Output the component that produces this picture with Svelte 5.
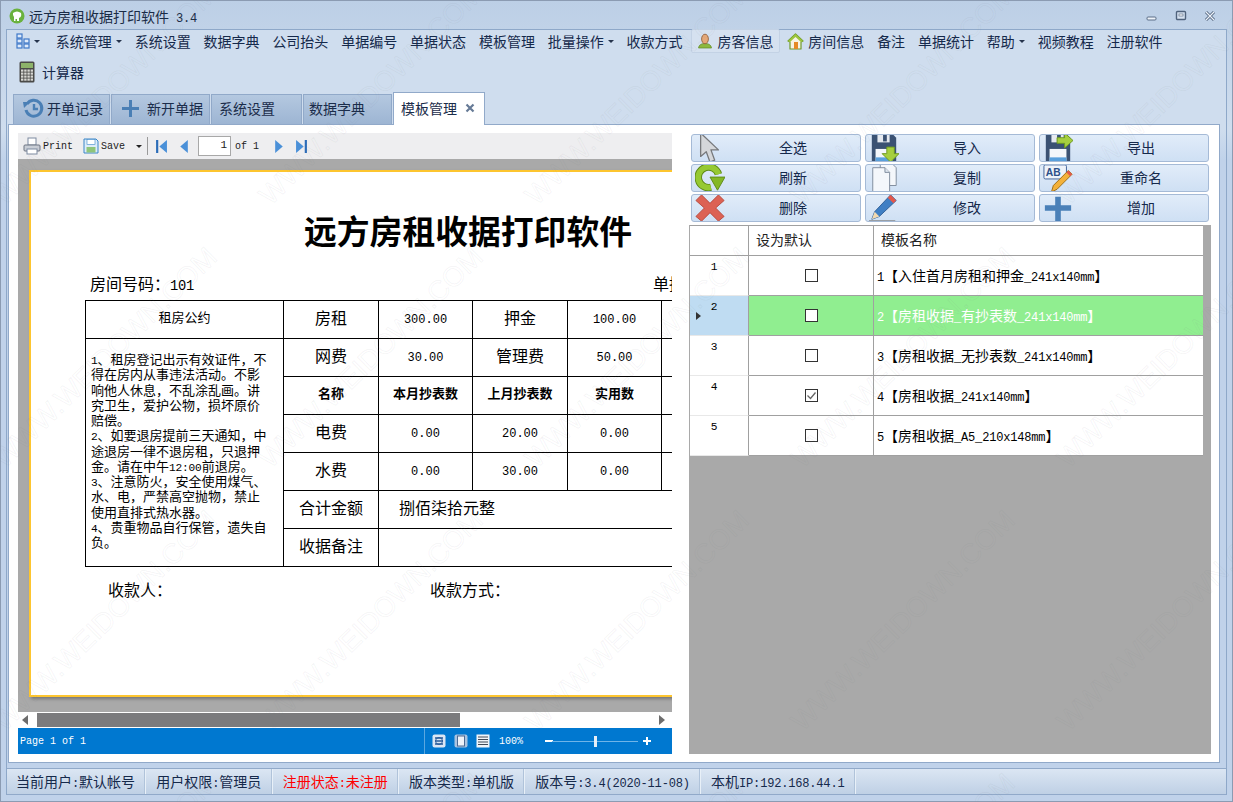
<script>
	const menu = [
		{ t: '系统管理', arrow: true }, { t: '系统设置' }, { t: '数据字典' }, { t: '公司抬头' }, { t: '单据编号' },
		{ t: '单据状态' }, { t: '模板管理' }, { t: '批量操作', arrow: true }, { t: '收款方式' },
		{ t: '房客信息', icon: 'user', hover: true }, { t: '房间信息', icon: 'home' }, { t: '备注' },
		{ t: '单据统计' }, { t: '帮助', arrow: true }, { t: '视频教程' }, { t: '注册软件' }
	];
	const tabs = [
		{ t: '开单记录', icon: 'history', w: 97, pad: 9, gap: 3 },
		{ t: '新开单据', icon: 'plus', w: 99, pad: 10, gap: 8 },
		{ t: '系统设置', w: 91, pad: 7, gap: 0 },
		{ t: '数据字典', w: 89, pad: 5, gap: 0 }
	];
	const buttons = [
		{ t: '全选', icon: 'cursor' }, { t: '导入', icon: 'import' }, { t: '导出', icon: 'export' },
		{ t: '刷新', icon: 'refresh' }, { t: '复制', icon: 'copy' }, { t: '重命名', icon: 'rename' },
		{ t: '删除', icon: 'remove' }, { t: '修改', icon: 'edit' }, { t: '增加', icon: 'add' }
	];
	const rows = [
		{ n: 1, name: '1【入住首月房租和押金_241x140mm】' },
		{ n: 2, name: '2【房租收据_有抄表数_241x140mm】', selected: true },
		{ n: 3, name: '3【房租收据_无抄表数_241x140mm】' },
		{ n: 4, name: '4【房租收据_241x140mm】', checked: true },
		{ n: 5, name: '5【房租收据_A5_210x148mm】' }
	];
	const status = ['当前用户:默认帐号', '用户权限:管理员', '注册状态:未注册', '版本类型:单机版', '版本号:3.4(2020-11-08)', '本机IP:192.168.44.1'];
	const rules = [
		'1、租房登记出示有效证件，不', '得在房内从事违法活动。不影', '响他人休息，不乱涂乱画。讲', '究卫生，爱护公物，损坏原价', '赔偿。',
		'2、如要退房提前三天通知，中', '途退房一律不退房租，只退押', '金。请在中午12:00前退房。',
		'3、注意防火，安全使用煤气、', '水、电，严禁高空抛物，禁止', '使用直排式热水器。',
		'4、贵重物品自行保管，遗失自', '负。'
	];

	// watermark repeats on a square lattice, each one starts bottom-left
	const marks = [];
	for (let row = -1; row < 4; row++) {
		for (let col = -2; col < 4; col++) {
			marks.push({ x: 540 + col * 266, y: 736 - row * 263 });
		}
	}

	// ascii runs get a half-width mono, the rest stays cjk
	const runs = (s) => s.match(/[\x00-\x7f]+|[^\x00-\x7f]+/g) ?? [];
	const isLatin = (s) => s.charCodeAt(0) < 128;
</script>

{#snippet txt(s)}
	{#each runs(s) as r}{#if isLatin(r)}<span class="lat">{r}</span>{:else}{r}{/if}{/each}
{/snippet}

{#snippet icon(name)}
	<svg class="ico" viewBox="0 0 32 32" width="32" height="32">
		{#if name === 'cursor'}
			<path d="M6 0 L6 25 L12 20 L16 31 L21 29 L17 18 L25 18 Z" fill="#d5d7da" stroke="#77797c" stroke-width="1.4" stroke-linejoin="round"/>
		{:else if name === 'import' || name === 'export'}
			<path d="M3 1 H25 L29 5 V30 H3 Z" fill="#3b5273"/>
			<rect x="9" y="1" width="13" height="9" fill="#e6eaf0"/>
			<rect x="15" y="2" width="4" height="7" fill="#3b5273"/>
			<rect x="7" y="17" width="18" height="13" fill="#f4f7fb"/>
			<rect x="7" y="26" width="18" height="4" fill="#5aa0dc"/>
			{#if name === 'import'}
				<path d="M19 15 H27 V22 H32 L23 31 L14 22 H19 Z" fill="#a6cf3f" stroke="#6d9a1f"/>
			{:else}
				<path d="M15 5 H23 V0 L32 8 L23 16 V11 H15 Z" fill="#a6cf3f" stroke="#6d9a1f"/>
			{/if}
		{:else if name === 'refresh'}
			<path d="M25 12 A11 11 0 1 0 17 26" fill="none" stroke="#5e8a17" stroke-width="8"/>
			<path d="M25 12 A11 11 0 1 0 17 26" fill="none" stroke="#96c932" stroke-width="6"/>
			<path d="M16 15 H32 L24 29 Z" fill="#84b826" stroke="#5e8a17"/>
		{:else if name === 'copy'}
			<path d="M12 0 H24 L29 5 V24 H12 Z" fill="#f4f7fb" stroke="#7d8a9b"/>
			<path d="M4 5 H17 L22 10 V31 H4 Z" fill="#f4f7fb" stroke="#7d8a9b"/>
			<path d="M17 5 V10 H22" fill="#dfe6ef" stroke="#7d8a9b"/>
		{:else if name === 'rename'}
			<rect x="1" y="2" width="24" height="15" rx="1.500" fill="#eef3fa" stroke="#3d5f96"/>
			<text x="3" y="14" class="ab">AB</text>
			<path d="M27 8 L31 12 L15 28 L9 31 L11 24 Z" fill="#f3b13a" stroke="#9a6a12"/>
			<path d="M27 8 L31 12 L29 14 L25 10 Z" fill="#e2584c"/>
		{:else if name === 'remove'}
			<path d="M7 2 L16 11 L25 2 L31 8 L22 16 L31 25 L25 30 L16 21 L7 30 L1 25 L10 16 L1 8 Z" fill="#dc6254" stroke="#b84a3e"/>
		{:else if name === 'edit'}
			<path d="M23 2 L29 8 L11 25 L3 28 L6 20 Z" fill="#3f7fc4" stroke="#2f5f96"/>
			<path d="M23 2 L29 8 L26 11 L20 5 Z" fill="#e2584c"/>
			<path d="M6 20 L11 25 L3 28 Z" fill="#f2d9b0"/>
			<rect x="0" y="29" width="28" height="3" fill="#8d8f93"/>
		{:else if name === 'add'}
			<path d="M13 4 H19 V13 H30 V19 H19 V30 H13 V19 H2 V13 H13 Z" fill="#4a80b8"/>
		{/if}
	</svg>
{/snippet}

<div class="window">
	<header class="title">
		<svg width="16" height="16" viewBox="0 0 16 16">
			<circle cx="8" cy="8" r="7.500" fill="#6ab23e"/>
			<path d="M4 5 Q8 2 12 5 Q13 9 10 10 V13 H8 V11 H6.500 V13 H5 V9 Q3.500 7 4 5 Z" fill="#fff"/>
		</svg>
		<span class="title-text">{@render txt('远方房租收据打印软件 3.4')}</span>
		<div class="win-btns">
			<svg width="12" height="12" viewBox="0 0 12 12"><rect x="1" y="7" width="9" height="3" rx="1" fill="#eef3f9" stroke="#5c6f88"/></svg>
			<svg width="12" height="12" viewBox="0 0 12 12"><rect x="1.500" y="1.500" width="9" height="8" rx="1" fill="#d6e2f0" stroke="#4f627c" stroke-width="1.400"/><rect x="4" y="4" width="4" height="2" fill="#fff" stroke="#4f627c" stroke-width=".6"/></svg>
			<svg width="12" height="12" viewBox="0 0 12 12"><path d="M2 2 L10 10 M10 2 L2 10" stroke="#4f627c" stroke-width="3"/><path d="M2 2 L10 10 M10 2 L2 10" stroke="#eef3f9" stroke-width="1.200"/></svg>
		</div>
	</header>

	<div class="frame">
		<nav class="menu">
			<div class="item first">
				<svg width="14" height="16" viewBox="0 0 14 16">
					<g fill="#dfeafa" stroke="#3f78c8" stroke-width="1.200">
						<rect x="1" y="1" width="5" height="4"/><rect x="8" y="6" width="5" height="4"/><rect x="1" y="6" width="5" height="4"/><rect x="1" y="11" width="5" height="4"/><rect x="8" y="11" width="5" height="4"/>
					</g>
				</svg>
				<i class="caret"></i>
			</div>
			{#each menu as m}
				<div class="item" class:hover={m.hover}>
					{#if m.icon === 'user'}
						<svg width="16" height="16" viewBox="0 0 16 16">
							<path d="M1.500 15 Q2 10.500 8 10.500 Q14 10.500 14.500 15 Z" fill="#8db83f" stroke="#5f8a22" stroke-width=".7"/>
							<ellipse cx="8" cy="6" rx="3.400" ry="4.800" fill="#e5a878" stroke="#8a5630" stroke-width=".8"/>
						</svg>
					{:else if m.icon === 'home'}
						<svg width="17" height="17" viewBox="0 0 17 17">
							<path d="M8.500 1 L16 8 L14 9 V16 H3 V9 L1 8 Z" fill="#f7f3e3" stroke="#6f9a2a" stroke-width="1.200" stroke-linejoin="round"/>
							<path d="M8.500 1 L16 8 L14 9 L8.500 4 L3 9 L1 8 Z" fill="#9cc53c"/>
							<rect x="7" y="9" width="4" height="7" fill="#e58a25"/>
						</svg>
					{/if}
					<span>{m.t}</span>
					{#if m.arrow}<i class="caret"></i>{/if}
				</div>
			{/each}
		</nav>
		<div class="menu-second">
			<svg width="16" height="22" viewBox="0 0 16 22">
				<rect x=".5" y=".5" width="15" height="21" rx="1.500" fill="#4a4a48"/>
				<rect x="2" y="2" width="12" height="5" fill="#8db36a"/>
				<g fill="#d8d8d4">
					{#each [8.5, 11.5, 14.5, 17.5] as y}
						{#each [2, 5.2, 8.4, 11.6] as x}
							<rect {x} {y} width="2.400" height="2.200"/>
						{/each}
					{/each}
				</g>
			</svg>
			<span>计算器</span>
		</div>

		<div class="tabs">
			{#each tabs as tab}
				<div class="tab" style:width="{tab.w}px" style:padding-left="{tab.pad}px" style:gap="{tab.gap}px">
					{#if tab.icon === 'history'}
						<svg width="21" height="21" viewBox="0 0 21 21">
							<path d="M4 6 A8 8 0 1 1 3 12" fill="none" stroke="#4a7fb5" stroke-width="3"/>
							<path d="M0 4 L7 4 L1 10 Z" fill="#4a7fb5"/>
							<path d="M11 6 V11 H15" fill="none" stroke="#4a7fb5" stroke-width="2.400"/>
						</svg>
					{:else if tab.icon === 'plus'}
						<svg width="17" height="17" viewBox="0 0 17 17"><path d="M7 0 H10 V7 H17 V10 H10 V17 H7 V10 H0 V7 H7 Z" fill="#4a7fb5"/></svg>
					{/if}
					<span>{tab.t}</span>
				</div>
			{/each}
			<div class="tab active">
				<span>模板管理</span>
				<svg width="10" height="10" viewBox="0 0 10 10"><path d="M1.500 1.500 L8.500 8.500 M8.500 1.500 L1.500 8.500" stroke="#667a96" stroke-width="2.200"/></svg>
			</div>
		</div>

		<main class="content">
			<section class="preview">
				<div class="pv-tools">
					<svg width="18" height="18" viewBox="0 0 18 18">
						<rect x="5" y="1" width="8" height="7" fill="#fff" stroke="#7d8aa0"/>
						<rect x="1" y="8" width="16" height="6" rx="1" fill="#c9ced6" stroke="#6d7482"/>
						<rect x="4" y="12" width="10" height="5" fill="#fff" stroke="#7d8aa0"/>
					</svg>
					<span class="pv-label">Print</span>
					<svg class="gap-l" width="16" height="16" viewBox="0 0 16 16">
						<path d="M1 1 H13 L15 3 V15 H1 Z" fill="#dcecf9" stroke="#3a86c8"/>
						<rect x="4" y="1.500" width="8" height="5" fill="#fff" stroke="#3a86c8" stroke-width=".6"/>
						<rect x="3.500" y="9" width="9" height="5.500" fill="#8fc57a"/>
					</svg>
					<span class="pv-label">Save</span>
					<i class="caret dark"></i>
					<b class="pv-sep"></b>
					<svg class="nav" viewBox="0 0 10 12"><rect x="0" y="0" width="2" height="12" fill="#2b6cb8"/><path d="M10 0 V12 L3 6 Z" fill="#4a90d8"/></svg>
					<svg class="nav n2" viewBox="0 0 10 12"><path d="M9 0 V12 L2 6 Z" fill="#4a90d8"/></svg>
					<span class="pv-page">1</span>
					<span class="pv-label of">of 1</span>
					<svg class="nav n3" viewBox="0 0 10 12"><path d="M1 0 V12 L8 6 Z" fill="#4a90d8"/></svg>
					<svg class="nav n4" viewBox="0 0 10 12"><path d="M0 0 V12 L7 6 Z" fill="#4a90d8"/><rect x="8" y="0" width="2" height="12" fill="#2b6cb8"/></svg>
				</div>

				<div class="canvas">
					<article class="page">
						<h1>远方房租收据打印软件</h1>
						<div class="meta"><span>{@render txt('房间号码：101')}</span><span class="meta-right">单据编号：</span></div>
						<table>
							<colgroup><col style="width:198px"/><col style="width:95px"/><col style="width:94px"/><col style="width:95px"/><col style="width:94px"/><col style="width:188px"/></colgroup>
							<tbody>
								<tr>
									<td class="small">租房公约</td>
									<td>房租</td><td class="num">300.00</td><td>押金</td><td class="num">100.00</td><td></td>
								</tr>
								<tr>
									<td class="rules" rowspan="6">
										{#each rules as line}
											<div>{@render txt(line)}</div>
										{/each}
									</td>
									<td>网费</td><td class="num">30.00</td><td>管理费</td><td class="num">50.00</td><td></td>
								</tr>
								<tr class="bold"><td>名称</td><td>本月抄表数</td><td>上月抄表数</td><td>实用数</td><td></td></tr>
								<tr><td>电费</td><td class="num">0.00</td><td class="num">20.00</td><td class="num">0.00</td><td></td></tr>
								<tr><td>水费</td><td class="num">0.00</td><td class="num">30.00</td><td class="num">0.00</td><td></td></tr>
								<tr><td>合计金额</td><td class="left" colspan="4">捌佰柒拾元整</td></tr>
								<tr><td>收据备注</td><td class="left" colspan="4"></td></tr>
							</tbody>
						</table>
						<div class="sign"><span>收款人：</span><span class="sign-r">收款方式：</span></div>
					</article>
				</div>

				<div class="hscroll">
					<svg width="6" height="10" viewBox="0 0 6 10"><path d="M6 0 V10 L0 5 Z" fill="#6d6d6d"/></svg>
					<div class="hscroll-track"><div class="hscroll-thumb"></div></div>
					<svg width="6" height="10" viewBox="0 0 6 10"><path d="M0 0 V10 L6 5 Z" fill="#6d6d6d"/></svg>
				</div>

				<div class="pv-status">
					<span class="pv-pages">Page 1 of 1</span>
					<div class="pv-right">
						<svg width="14" height="14" viewBox="0 0 14 14"><rect x=".5" y=".5" width="13" height="13" rx="2" fill="#dbe6f3"/><path d="M3 4 H11 M3 7 H11 M3 10 H11" stroke="#2a5d9c" stroke-width="1.500"/><circle cx="7" cy="7" r="3.500" fill="none" stroke="#2a5d9c"/></svg>
						<svg width="14" height="14" viewBox="0 0 14 14"><rect x=".5" y=".5" width="13" height="13" rx="2" fill="#a9c3e0"/><rect x="3.500" y="2" width="7" height="10" fill="#eef3f9" stroke="#4a6a94"/></svg>
						<svg width="14" height="14" viewBox="0 0 14 14"><rect x=".5" y=".5" width="13" height="13" fill="#f1f4f8"/><path d="M2 3 H12 M2 5.500 H12 M2 8 H12 M2 10.500 H12" stroke="#404a58" stroke-width="1.200"/></svg>
						<span class="zoom-pct">100%</span>
						<b class="zoom-minus"></b>
						<div class="slider"><b></b></div>
						<b class="zoom-plus"></b>
					</div>
				</div>
			</section>

			<aside class="side">
				<div class="btns">
					{#each buttons as b}
						<button type="button">
							<span class="btn-ico">{@render icon(b.icon)}</span>
							<span class="btn-text">{b.t}</span>
						</button>
					{/each}
				</div>
				<div class="grid-wrap">
					<div class="grid">
						<div class="cell rh"></div>
						<div class="cell head">设为默认</div>
						<div class="cell head">模板名称</div>
						{#each rows as r}
							<div class="cell rh" class:sel={r.selected}>
								<span class="lat">{r.n}</span>
								{#if r.selected}<i class="row-arrow"></i>{/if}
							</div>
							<div class="cell chk" class:sel-g={r.selected}>
								<span class="box">
									{#if r.checked}
										<svg width="11" height="11" viewBox="0 0 11 11"><path d="M1.500 5.500 L4.500 8.500 L9.500 2.500" fill="none" stroke="#666" stroke-width="1.300"/></svg>
									{/if}
								</span>
							</div>
							<div class="cell name" class:sel-g={r.selected}><span>{@render txt(r.name)}</span></div>
						{/each}
					</div>
				</div>
			</aside>
		</main>

		<footer class="status">
			{#each status as s, i}
				<span class="st" class:red={i === 2}><span>{@render txt(s)}</span></span>
			{/each}
		</footer>
	</div>

	<div class="watermark" aria-hidden="true">
		{#each marks as m}
			<span style:left="{m.x}px" style:top="{m.y}px">WWW.WEIDOWN.COM</span>
		{/each}
	</div>
</div>

<style>
	:global(body) {
		margin: 0;
		background: #c6d6ea;
	}

	.window {
		position: relative;
		width: 1233px;
		height: 802px;
		display: flex;
		flex-direction: column;
		overflow: hidden;
		box-shadow: inset 0 1px #8b9bb2, inset 1px 0 #8b9bb2, inset -1px 0 #8b9bb2, inset 0 -1px #8b9bb2;
		background: linear-gradient(#bccfe6, #cfddee 130px, #c0d2ea 160px);
		font-family: 'Noto Sans CJK SC', sans-serif;
		font-size: 14px;
		color: #15294b;
	}

	.lat {
		font-family: 'Liberation Mono', monospace;
		font-size: 0.86em;
		letter-spacing: -0.016em;
	}

	.title {
		height: 29px;
		flex: none;
		display: flex;
		align-items: center;
		gap: 4px;
		padding: 3px 0 0 9px;
		box-sizing: border-box;
		color: #1a2b45;
	}
	.win-btns {
		margin-left: auto;
		display: flex;
		gap: 17px;
		padding-right: 17px;
	}

	.frame {
		flex: 1;
		min-height: 0;
		margin: 0 6px 7px 6px;
		display: flex;
		flex-direction: column;
		border-top: 1px solid #8ea8c9;
		border-left: 1px solid #8ea8c9;
		border-right: 1px solid #8ea8c9;
		background: linear-gradient(#cfddee 100px, #c0d2ea 130px);
	}

	.menu {
		display: flex;
		align-items: center;
		height: 27px;
		box-sizing: border-box;
		padding: 0 0 5px 9px;
		gap: 0.85px;
	}
	.item {
		display: flex;
		align-items: center;
		gap: 4px;
		height: 22px;
		padding: 0 6px;
		white-space: nowrap;
	}
	.item.first {
		width: 24px;
		padding: 0;
		margin-right: 9px;
		gap: 4px;
	}
	.item.hover {
		height: 24px;
		border: 1px solid #c3d2e5;
		border-radius: 2px;
		background: #d5e1f0;
		padding: 0 6px 0 5px;
		box-sizing: border-box;
		margin: 0 0 0 2px;
	}
	.caret {
		display: inline-block;
		width: 0;
		height: 0;
		border: 3px solid transparent;
		border-top: 3px solid #26344c;
		border-bottom: 0;
	}
	.caret.dark {
		margin-left: 11px;
		border-top-color: #222;
	}

	.menu-second {
		display: flex;
		align-items: center;
		gap: 7px;
		height: 31px;
		padding: 0 0 2px 12px;
		box-sizing: border-box;
	}

	.tabs {
		height: 36px;
		flex: none;
		display: flex;
		align-items: flex-end;
		padding-left: 6px;
	}
	.tab {
		height: 30px;
		box-sizing: border-box;
		display: flex;
		align-items: center;
		padding-bottom: 3px;
		margin-right: 1px;
		border: 1px solid #91a9c9;
		border-bottom: 0;
		background: linear-gradient(#b4c8e0, #9db5d3);
		color: #1a2c4a;
	}
	.tab.active {
		width: 92px;
		height: 33px;
		background: #fff;
		margin: 0 0 -1px;
		padding-left: 7px;
		position: relative;
		z-index: 1;
		gap: 8px;
	}

	.content {
		flex: 1;
		min-height: 0;
		display: flex;
		gap: 17px;
		margin: 0 6px 0 1px;
		padding: 8px 8px 8px 9px;
		background: #fff;
		border: 1px solid #91a9c9;
	}

	.preview {
		width: 654px;
		flex: none;
		display: flex;
		flex-direction: column;
		min-width: 0;
	}
	.pv-tools {
		height: 26px;
		flex: none;
		display: flex;
		align-items: center;
		padding-left: 5px;
		background: #eeeef0;
		color: #222;
	}
	.pv-label {
		margin-left: 2px;
		font-family: 'Liberation Mono', monospace;
		font-size: 10px;
	}
	.gap-l {
		margin-left: 10px;
	}
	.pv-sep {
		width: 1px;
		height: 18px;
		margin-left: 5px;
		background: #9a9a9a;
	}
	.nav {
		width: 11px;
		height: 13px;
		margin-left: 8px;
	}
	.n2 {
		margin-left: 11px;
	}
	.pv-page {
		width: 33px;
		height: 20px;
		margin-left: 9px;
		padding-right: 3px;
		box-sizing: border-box;
		border: 1px solid #a8a8a8;
		background: #fff;
		text-align: right;
		font-family: 'Liberation Mono', monospace;
		font-size: 11px;
		line-height: 17px;
	}
	.of {
		margin-left: 4px;
	}
	.n3 {
		margin-left: 15px;
	}
	.n4 {
		margin-left: 11px;
	}

	.canvas {
		flex: 1;
		min-height: 0;
		overflow: hidden;
		padding: 11px 0 15px 11px;
		background: #a9a9a9;
		box-sizing: border-box;
	}
	.page {
		width: 878px;
		height: 100%;
		box-sizing: border-box;
		padding: 40px 0 0 54px;
		border: 2px solid #fdc52f;
		background: #fff;
		color: #000;
		box-shadow: 2px 2px 3px #777;
		font-size: 16px;
	}
	h1 {
		margin: 0 0 0 -54px;
		font-size: 32.8px;
		line-height: 36px;
		font-weight: 700;
		text-align: center;
		white-space: nowrap;
	}
	.meta {
		margin: 24px 0 0 5px;
		height: 23px;
		line-height: 23px;
		display: flex;
	}
	.meta-right {
		margin-left: 459px;
		white-space: nowrap;
	}
	table {
		border-collapse: collapse;
		table-layout: fixed;
		width: 764px;
		margin-top: 5px;
	}
	td {
		box-sizing: border-box;
		border: 1px solid #000;
		height: 38px;
		line-height: 22px;
		padding: 0 0 5px;
		text-align: center;
		white-space: nowrap;
	}
	td.left {
		text-align: left;
		padding-left: 20px;
	}
	td.num {
		padding: 0;
		font-family: 'Liberation Mono', monospace;
		font-size: 12px;
	}
	.small {
		font-size: 13px;
	}
	.bold td {
		font-size: 13px;
		font-weight: 700;
	}
	.rules {
		vertical-align: top;
		text-align: left;
		padding: 12px 0 0 5px;
		font-size: 13px;
	}
	.rules div {
		height: 15.25px;
		line-height: 15.25px;
	}
	.sign {
		display: flex;
		margin: 11px 0 0 23px;
		line-height: 22px;
	}
	.sign-r {
		margin-left: 258px;
	}

	.hscroll {
		height: 14px;
		flex: none;
		margin-top: 1px;
		display: flex;
		align-items: center;
		gap: 4px;
		padding: 0 7px 0 4px;
		background: #fff;
	}
	.hscroll-track {
		flex: 1;
		margin: 0 2px 0 0;
		height: 14px;
	}
	.hscroll-thumb {
		width: 423px;
		height: 14px;
		margin-left: 5px;
		background: #7b7b7d;
	}

	.pv-status {
		height: 26px;
		flex: none;
		margin-top: 1px;
		display: flex;
		align-items: center;
		background: #0078d0;
		color: #fff;
	}
	.pv-pages {
		margin-left: 2px;
		font-family: 'Liberation Mono', monospace;
		font-size: 10px;
	}
	.pv-right {
		margin-left: auto;
		width: 248px;
		height: 100%;
		box-sizing: border-box;
		border-left: 1px solid #5aa7e0;
		display: flex;
		align-items: center;
		gap: 8px;
		padding-left: 7px;
	}
	.zoom-pct {
		margin: 0 14px 0 1px;
		font-family: 'Liberation Mono', monospace;
		font-size: 10px;
	}
	.zoom-minus, .zoom-plus {
		position: relative;
		width: 8px;
		height: 2px;
		flex: none;
		background: #fff;
	}
	.zoom-plus::after {
		content: '';
		position: absolute;
		left: 3px;
		top: -3px;
		width: 2px;
		height: 8px;
		background: #fff;
	}
	.slider {
		position: relative;
		width: 86px;
		height: 1px;
		flex: none;
		margin: 0 -3px 0 -9px;
		background: #6fb4e8;
	}
	.slider b {
		position: absolute;
		left: 42px;
		top: -5px;
		width: 3px;
		height: 11px;
		background: #e6eef6;
	}

	.side {
		flex: 1;
		min-width: 0;
		display: flex;
		flex-direction: column;
		padding-top: 1px;
	}
	.btns {
		display: grid;
		grid-template-columns: repeat(3, 170px);
		grid-auto-rows: 28px;
		gap: 2px 4px;
		padding-left: 2px;
	}
	button {
		display: flex;
		align-items: center;
		padding: 0;
		overflow: hidden;
		border: 1px solid #a5bad6;
		border-radius: 3px;
		background: linear-gradient(#e1ecf9, #cfe0f4);
		font: inherit;
		color: #15294b;
	}
	.btn-ico {
		width: 34px;
		height: 28px;
		flex: none;
		display: flex;
		align-items: center;
		justify-content: center;
		padding-left: 2px;
		box-sizing: border-box;
	}
	.btn-text {
		flex: 1;
		text-align: center;
		padding-bottom: 2px;
	}
	.ico {
		width: 30px;
		height: 30px;
		flex: none;
	}
	.ab {
		font-family: 'Liberation Sans', sans-serif;
		font-size: 11px;
		font-weight: 700;
		fill: #2c4f88;
	}

	.grid-wrap {
		flex: 1;
		min-height: 0;
		margin-top: 3px;
		background: #a9a9a9;
		padding-left: 1px;
	}
	.grid {
		display: grid;
		grid-template-columns: 59px 125px 329px;
		grid-template-rows: 30px repeat(5, 40px);
		width: 513px;
		background: #fff;
		border-top: 1px solid #a0a0a0;
		color: #000;
	}
	.cell {
		box-sizing: border-box;
		border-right: 1px solid #a0a0a0;
		border-bottom: 1px solid #a0a0a0;
		display: flex;
		align-items: center;
	}
	.head {
		padding: 0 0 3px 7px;
		color: #222;
	}
	.head:nth-child(3) {
		border-right: 0;
	}
	.rh {
		position: relative;
		justify-content: center;
		align-items: flex-start;
		padding: 5px 10px 0 0;
		font-size: 13px;
		border-bottom-color: #e8e8e8;
	}
	.rh:first-child {
		border-bottom-color: #a0a0a0;
	}
	.rh.sel {
		background: #bfdcf2;
	}
	.row-arrow {
		position: absolute;
		left: 6px;
		top: 16px;
		border: 4px solid transparent;
		border-left: 5px solid #333;
		border-right: 0;
	}
	.chk {
		justify-content: center;
	}
	.sel-g {
		background: #90ee90;
		color: #fff;
	}
	.box {
		width: 13px;
		height: 13px;
		box-sizing: border-box;
		border: 1px solid #333;
		background: #fff;
		display: flex;
		align-items: center;
		justify-content: center;
	}
	.name {
		padding: 0 0 2px 3px;
		border-right: 0;
		white-space: nowrap;
	}

	.status {
		height: 27px;
		flex: none;
		margin-top: 5px;
		display: flex;
		align-items: center;
		border: 1px solid #91a9c9;
		border-left: 0;
		border-right: 0;
		box-sizing: border-box;
		background: linear-gradient(#dbe6f3, #bfd0e5);
	}
	.st {
		height: 100%;
		display: flex;
		align-items: center;
		padding: 0 9.3px 2px 11px;
		box-sizing: border-box;
		border-right: 1px solid #b0c3da;
		box-shadow: 1px 0 0 #e8f0f8;
		white-space: nowrap;
	}
	.st:first-child {
		padding-left: 9px;
	}
	.st.red {
		color: #f00;
	}

	.watermark {
		position: absolute;
		inset: 0;
		overflow: hidden;
		pointer-events: none;
	}
	.watermark span {
		position: absolute;
		transform-origin: 0 100%;
		transform: translateY(-100%) rotate(-44.500deg);
		font-family: 'Liberation Sans', sans-serif;
		font-size: 28px;
		line-height: 28px;
		color: transparent;
		-webkit-text-stroke: 1px rgba(120, 125, 135, 0.07);
		white-space: nowrap;
	}
</style>
